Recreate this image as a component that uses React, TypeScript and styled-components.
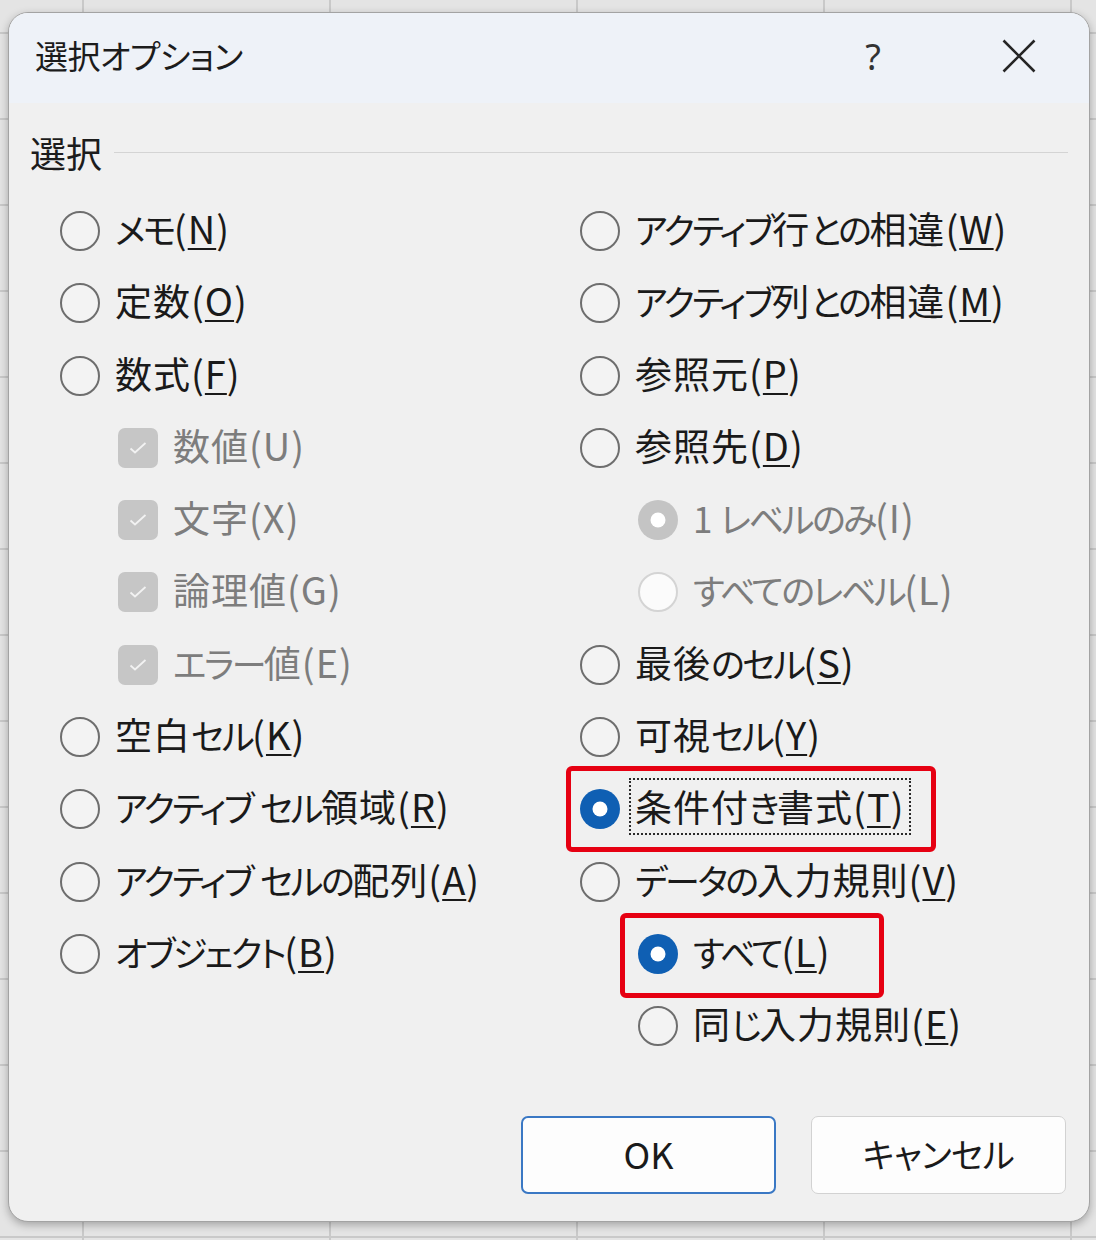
import React from 'react';
import styled, { createGlobalStyle } from 'styled-components';

const GlobalStyle = createGlobalStyle`
  html, body { margin: 0; padding: 0; }
  body {
    min-height: 100vh;
    font-family: "Noto Sans CJK JP", "Noto Sans", sans-serif;
    font-feature-settings: "palt";
    background-color: #e4e4e4;
    background-image:
      linear-gradient(to right, #c9c9c9 2px, transparent 2px),
      linear-gradient(to bottom, #c9c9c9 2px, transparent 2px);
    background-size: 247px 86px;
    background-position: 82px 32px;
    overflow: hidden;
  }
`;

// --- types ---
type Control = 'radio' | 'check';
type RadioState = 'off' | 'on' | 'disabledOn' | 'disabledOff';
type RunKind = 'kana' | 'kanji' | 'other';

type Item = {
  kind: Control;
  label: string;
  key: string;
  state?: RadioState;
  indent?: boolean;
  disabled?: boolean;
  focus?: boolean;
  hl?: { l: number; r: number; t: number; b: number };
};

const leftItems: Item[] = [
  { kind: 'radio', label: 'メモ', key: 'N' },
  { kind: 'radio', label: '定数', key: 'O' },
  { kind: 'radio', label: '数式', key: 'F' },
  { kind: 'check', label: '数値', key: 'U', indent: true, disabled: true },
  { kind: 'check', label: '文字', key: 'X', indent: true, disabled: true },
  { kind: 'check', label: '論理値', key: 'G', indent: true, disabled: true },
  { kind: 'check', label: 'エラー値', key: 'E', indent: true, disabled: true },
  { kind: 'radio', label: '空白セル', key: 'K' },
  { kind: 'radio', label: 'アクティブ セル領域', key: 'R' },
  { kind: 'radio', label: 'アクティブ セルの配列', key: 'A' },
  { kind: 'radio', label: 'オブジェクト', key: 'B' },
];

const rightItems: Item[] = [
  { kind: 'radio', label: 'アクティブ行との相違', key: 'W' },
  { kind: 'radio', label: 'アクティブ列との相違', key: 'M' },
  { kind: 'radio', label: '参照元', key: 'P' },
  { kind: 'radio', label: '参照先', key: 'D' },
  { kind: 'radio', label: '1 レベルのみ', key: 'I', indent: true, disabled: true, state: 'disabledOn' },
  { kind: 'radio', label: 'すべてのレベル', key: 'L', indent: true, disabled: true, state: 'disabledOff' },
  { kind: 'radio', label: '最後のセル', key: 'S' },
  { kind: 'radio', label: '可視セル', key: 'Y' },
  { kind: 'radio', label: '条件付き書式', key: 'T', state: 'on', focus: true, hl: { l: 14, r: 29, t: 7, b: 7 } },
  { kind: 'radio', label: 'データの入力規則', key: 'V' },
  { kind: 'radio', label: 'すべて', key: 'L', indent: true, state: 'on', hl: { l: 18, r: 51, t: 5, b: 8 } },
  { kind: 'radio', label: '同じ入力規則', key: 'E', indent: true },
];

// kana in the original UI font are narrower than kanji, so split into runs
function splitRuns(s: string): { kind: RunKind; text: string }[] {
  const out: { kind: RunKind; text: string }[] = [];
  for (const ch of s) {
    const kind: RunKind = /[\u3040-\u30ff]/.test(ch)
      ? 'kana'
      : /[\u4e00-\u9fff]/.test(ch)
      ? 'kanji'
      : 'other';
    const last = out[out.length - 1];
    if (last && last.kind === kind) last.text += ch;
    else out.push({ kind, text: ch });
  }
  return out;
}

// --- styled ---
const Dialog = styled.div`
  box-sizing: border-box;
  margin: 12px 0 0 8px;
  width: 1082px;
  height: 1210px;
  border: 1.5px solid #a3a3a3;
  border-radius: 20px;
  background: #f0f0f0;
  box-shadow: 0 3px 8px rgba(0, 0, 0, 0.28);
  overflow: hidden;
  display: flex;
  flex-direction: column;
`;

const TitleBar = styled.div`
  height: 90px;
  flex: none;
  background: #eef2f8;
  display: flex;
  align-items: center;
  padding: 0 30px 0 26px;
`;

const Title = styled.div`
  flex: 1;
  font-size: 33px;
  color: #1c1c1c;
  margin-top: -6px;
  letter-spacing: -0.5px;
`;

const TitleButton = styled.div<{ $gap?: number }>`
  width: 80px;
  height: 90px;
  display: flex;
  align-items: center;
  justify-content: center;
  margin-right: ${(p) => p.$gap ?? 0}px;
  font-family: "Noto Sans", sans-serif;
  font-size: 36px;
  color: #333;
  margin-top: -4px;
`;

const Body = styled.div`
  flex: 1;
  display: flex;
  flex-direction: column;
  padding: 26px 21px 0 21px;
`;

const GroupHeader = styled.div`
  display: flex;
  align-items: center;
  gap: 12px;
  height: 50px;
`;

const GroupLabel = styled.span`
  font-size: 36px;
  color: #1c1c1c;
  line-height: 50px;
  margin-top: -4px;
`;

const GroupLine = styled.div`
  flex: 1;
  height: 1.5px;
  background: #d4d4d4;
  margin-top: -3px;
`;

const Columns = styled.div`
  display: grid;
  grid-template-columns: 520px 1fr;
  padding: 16px 0 0 30px;
`;

const Column = styled.div`
  display: flex;
  flex-direction: column;
  align-items: flex-start;
`;

const Row = styled.div<{ $indent?: boolean; $hl?: Item['hl'] }>`
  position: relative;
  height: 72.27px;
  display: flex;
  align-items: center;
  gap: 13px;
  margin-left: ${(p) => (p.$indent ? 58 : 0)}px;

  ${(p) =>
    p.$hl &&
    `
    &::after {
      content: '';
      position: absolute;
      top: -${p.$hl.t}px;
      bottom: -${p.$hl.b}px;
      left: -${p.$hl.l}px;
      right: -${p.$hl.r}px;
      border: 5px solid #e60012;
      border-radius: 6px;
      pointer-events: none;
    }
  `}
`;

const Radio = styled.span<{ $state: RadioState }>`
  position: relative;
  box-sizing: border-box;
  width: 40px;
  height: 40px;
  flex: none;
  border-radius: 50%;
  border: ${(p) =>
    p.$state === 'off'
      ? '2px solid #6e6e6e'
      : p.$state === 'disabledOff'
      ? '2px solid #d4d4d4'
      : 'none'};
  background: ${(p) =>
    p.$state === 'on'
      ? '#0f5fb3'
      : p.$state === 'disabledOn'
      ? '#c4c4c4'
      : p.$state === 'disabledOff'
      ? '#fbfbfb'
      : '#f3f3f3'};

  &::after {
    content: '';
    display: ${(p) => (p.$state === 'on' || p.$state === 'disabledOn' ? 'block' : 'none')};
    position: absolute;
    left: 50%;
    top: 50%;
    width: 15px;
    height: 15px;
    border-radius: 50%;
    background: #fff;
    transform: translate(-50%, -50%);
  }
`;

const CheckBox = styled.span`
  width: 40px;
  height: 40px;
  flex: none;
  border-radius: 7px;
  background: #c6c6c6;
  display: flex;
  align-items: center;
  justify-content: center;
`;

const Label = styled.span<{ $disabled?: boolean; $focus?: boolean }>`
  font-size: 35px;
  line-height: 48px;
  margin-top: -5px;
  color: ${(p) => (p.$disabled ? '#7d7d7d' : '#1a1a1a')};
  white-space: pre;
  padding: 0 2px;
  ${(p) => p.$focus && 'outline: 2px dotted #2a2a2a; outline-offset: 2px;'}

  u {
    text-decoration-thickness: 2px;
    text-underline-offset: 4px;
  }
`;

const Run = styled.span<{ $kind: RunKind }>`
  font-size: ${(p) => (p.$kind === 'kanji' ? 37 : 35)}px;
  letter-spacing: ${(p) => (p.$kind === 'kana' ? -2.5 : p.$kind === 'kanji' ? 1 : 0)}px;
`;

const Accel = styled.span`
  font-size: 38px;
  letter-spacing: 1px;
`;

const Footer = styled.div`
  display: flex;
  justify-content: flex-end;
  gap: 35px;
  margin-top: 54px;
  padding-right: 2px;
`;

const Button = styled.button<{ $primary?: boolean }>`
  width: 255px;
  height: 78px;
  box-sizing: border-box;
  border-radius: 7px;
  background: #fdfdfd;
  border: ${(p) => (p.$primary ? '2px solid #3a78c4' : '1.5px solid #d2d2d2')};
  font-family: "Noto Sans CJK JP", "Noto Sans", sans-serif;
  font-feature-settings: "palt";
  font-size: ${(p) => (p.$primary ? 36 : 34)}px;
  letter-spacing: ${(p) => (p.$primary ? 0 : -0.5)}px;
  color: #1a1a1a;
  padding: 0 0 4px;
  display: flex;
  align-items: center;
  justify-content: center;
`;

function ItemRow({ item }: { item: Item }) {
  return (
    <Row $indent={item.indent} $hl={item.hl}>
      {item.kind === 'radio' ? (
        <Radio $state={item.state ?? 'off'} />
      ) : (
        <CheckBox>
          <svg width="18" height="14" viewBox="0 0 18 14">
            <polyline points="1.5,7.5 6,11.5 16.5,2" fill="none" stroke="#f2f2f2" strokeWidth="1.8" />
          </svg>
        </CheckBox>
      )}
      <Label $disabled={item.disabled} $focus={item.focus}>
        {splitRuns(item.label).map((r, i) => (
          <Run key={i} $kind={r.kind}>
            {r.text}
          </Run>
        ))}
        <Accel>
          ({item.disabled ? item.key : <u>{item.key}</u>})
        </Accel>
      </Label>
    </Row>
  );
}

export default function App() {
  return (
    <>
      <GlobalStyle />
      <Dialog>
        <TitleBar>
          <Title>選択オプション</Title>
          <TitleButton $gap={66}>?</TitleButton>
          <TitleButton>
            <svg width="34" height="34" viewBox="0 0 34 34">
              <path d="M1.5 1.5 L32.5 32.5 M32.5 1.5 L1.5 32.5" stroke="#262626" strokeWidth="2.6" />
            </svg>
          </TitleButton>
        </TitleBar>
        <Body>
          <GroupHeader>
            <GroupLabel>選択</GroupLabel>
            <GroupLine />
          </GroupHeader>
          <Columns>
            <Column>
              {leftItems.map((it, i) => (
                <ItemRow key={i} item={it} />
              ))}
            </Column>
            <Column>
              {rightItems.map((it, i) => (
                <ItemRow key={i} item={it} />
              ))}
            </Column>
          </Columns>
          <Footer>
            <Button $primary>OK</Button>
            <Button>キャンセル</Button>
          </Footer>
        </Body>
      </Dialog>
    </>
  );
}
